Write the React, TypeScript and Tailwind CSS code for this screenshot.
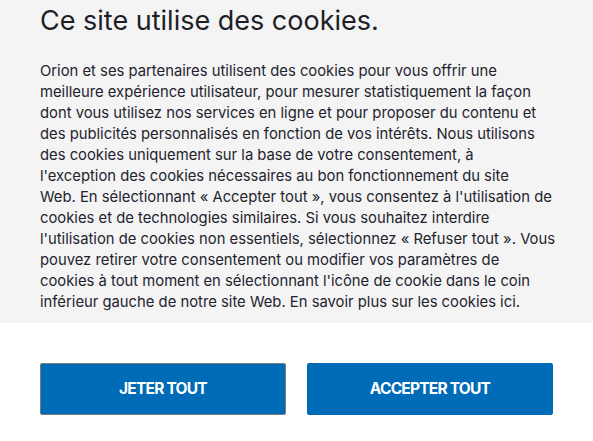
import React from "react";

const lines = [
  "Orion et ses partenaires utilisent des cookies pour vous offrir une",
  "meilleure expérience utilisateur, pour mesurer statistiquement la façon",
  "dont vous utilisez nos services en ligne et pour proposer du contenu et",
  "des publicités personnalisés en fonction de vos intérêts. Nous utilisons",
  "des cookies uniquement sur la base de votre consentement, à",
  "l'exception des cookies nécessaires au bon fonctionnement du site",
  "Web. En sélectionnant « Accepter tout », vous consentez à l'utilisation de",
  "cookies et de technologies similaires. Si vous souhaitez interdire",
  "l'utilisation de cookies non essentiels, sélectionnez « Refuser tout ». Vous",
  "pouvez retirer votre consentement ou modifier vos paramètres de",
  "cookies à tout moment en sélectionnant l'icône de cookie dans le coin",
  "inférieur gauche de notre site Web. En savoir plus sur les cookies ici.",
];

const App = () => {
  return (
    <div className="w-[593px] h-[441px] bg-white font-['Inter','Liberation_Sans',sans-serif] overflow-hidden">
      {/* Bloc texte */}
      <div className="bg-[#f4f4f4] h-[323px] px-10 pt-[4px]">
        <h1 className="text-[27px] leading-[34px] text-[#1e1e28] font-normal">Ce site utilise des cookies.</h1>
        <p className="mt-[23px] text-[14.8px] leading-[21px] text-[#23232e]">
          {lines.map((l, i) => (
            <span key={i} className="block whitespace-nowrap">
              {l}
            </span>
          ))}
        </p>
      </div>

      {/* Boutons */}
      <div className="flex gap-[21px] px-10 pt-[40px]">
        <button className="w-[246px] h-[52px] rounded-[2px] border border-[#7a7a7a] bg-[#006bb6] text-white text-[15.5px] font-bold uppercase tracking-[-0.05em]">
          Jeter tout
        </button>
        <button className="w-[246px] h-[52px] rounded-[2px] bg-[#006bb6] text-white text-[15.5px] font-bold uppercase tracking-[-0.05em]">
          Accepter tout
        </button>
      </div>
    </div>
  );
};

export default App;
